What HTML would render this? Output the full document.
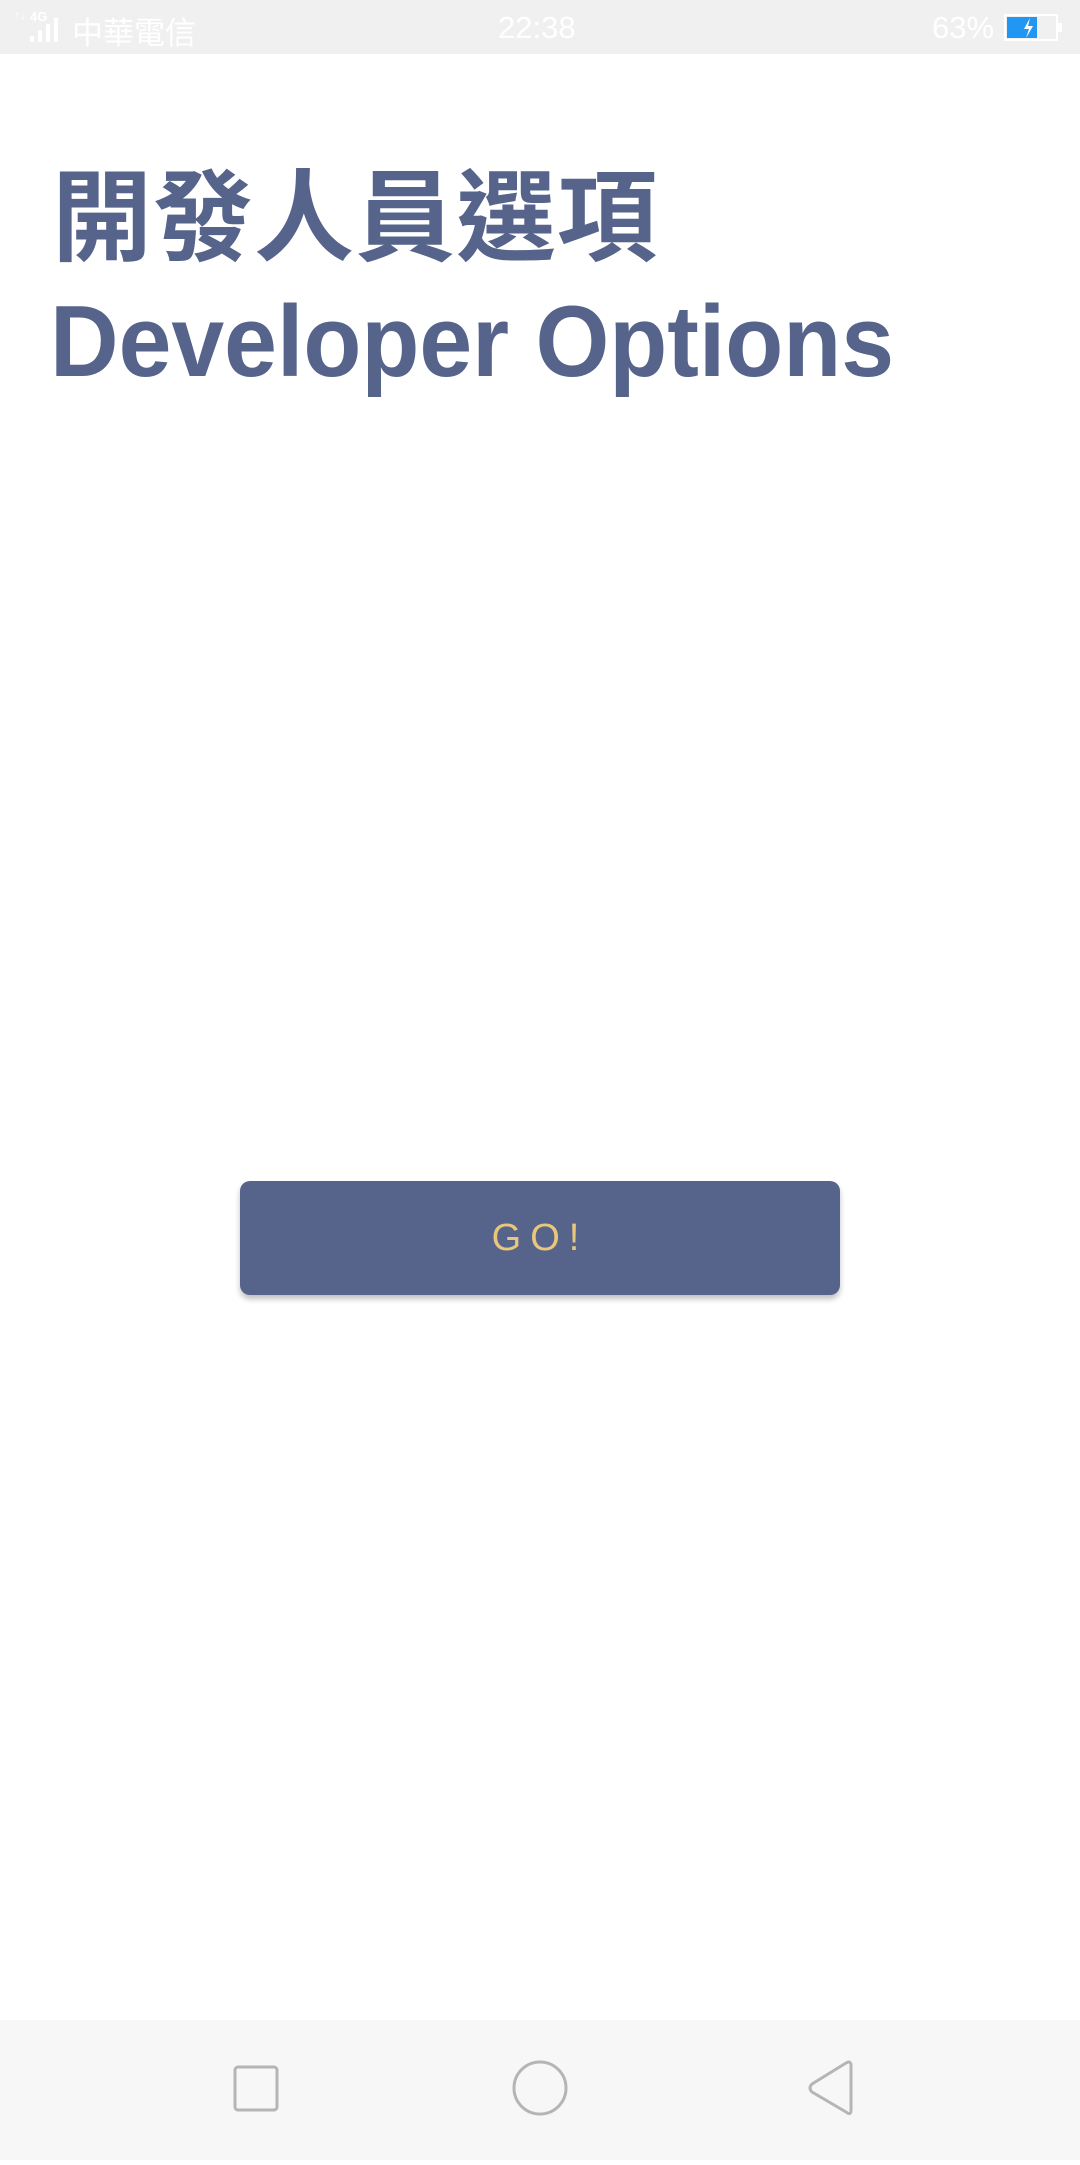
<!DOCTYPE html>
<html><head><meta charset="utf-8"><style>
html,body{margin:0;padding:0;width:1080px;height:2160px;background:#fff;overflow:hidden;font-family:"Liberation Sans","Noto Sans CJK TC",sans-serif}
.sb{position:absolute;left:0;top:0;width:1080px;height:54px;background:#f0f0f0;color:#fff;font-size:31px}
.t1{position:absolute;left:52px;top:150px;font-size:100px;font-weight:bold;color:#56648b;font-family:"Noto Sans CJK TC",sans-serif;line-height:120px;letter-spacing:1px}
.t2{position:absolute;left:50px;top:282px;font-size:101px;font-weight:bold;color:#56648b;line-height:120px;transform:scaleX(0.94);transform-origin:left}
.btn{position:absolute;left:240px;top:1181px;width:600px;height:114px;background:#56648b;border-radius:10px;box-shadow:0 4px 6px rgba(0,0,0,0.25);color:#e9c77a;font-size:38px;text-align:center;line-height:114px;letter-spacing:9px}
.nav{position:absolute;left:0;top:2020px;width:1080px;height:140px;background:#f7f7f7}
</style></head><body>
<div class="sb">
<span style="position:absolute;left:14px;top:8px;font-size:12px">↑↓</span>
<span style="position:absolute;left:30px;top:9px;font-size:13px;font-weight:bold">4G</span>
<svg style="position:absolute;left:30px;top:14px" width="40" height="30"><rect x="0" y="22" width="4" height="6" fill="#fff"/><rect x="8" y="16" width="4" height="12" fill="#fff"/><rect x="16" y="10" width="4" height="18" fill="#fff"/><rect x="24" y="4" width="4" height="24" fill="#fff"/></svg>
<span style="position:absolute;left:72px;top:8px">中華電信</span>
<span style="position:absolute;left:498px;top:10px">22:38</span>
<span style="position:absolute;left:932px;top:10px">63%</span>
<svg style="position:absolute;left:1004px;top:14px" width="60" height="28"><rect x="1" y="1" width="52" height="25" fill="none" stroke="#fff" stroke-width="2"/><rect x="3" y="3" width="30" height="21" fill="#2196f3"/><rect x="54" y="9" width="4" height="9" fill="#fff"/><path d="M26 4 L20 15 L25 15 L22 24 L29 12 L24 12 Z" fill="#fff"/></svg>
</div>
<div class="t1">開發人員選項</div>
<div class="t2">Developer Options</div>
<div class="btn">GO!</div>
<div class="nav">
<svg width="1080" height="140">
<rect x="235" y="47" width="42" height="43" rx="3" fill="none" stroke="#b5b5b5" stroke-width="3"/>
<circle cx="540" cy="68" r="26" fill="none" stroke="#b5b5b5" stroke-width="3"/>
<path d="M846 43 Q851 40 851 46 L851 90 Q851 96 846 92 L812 72 Q808 68 812 64 Z" fill="none" stroke="#b5b5b5" stroke-width="3" stroke-linejoin="round"/>
</svg>
</div>
</body></html>
